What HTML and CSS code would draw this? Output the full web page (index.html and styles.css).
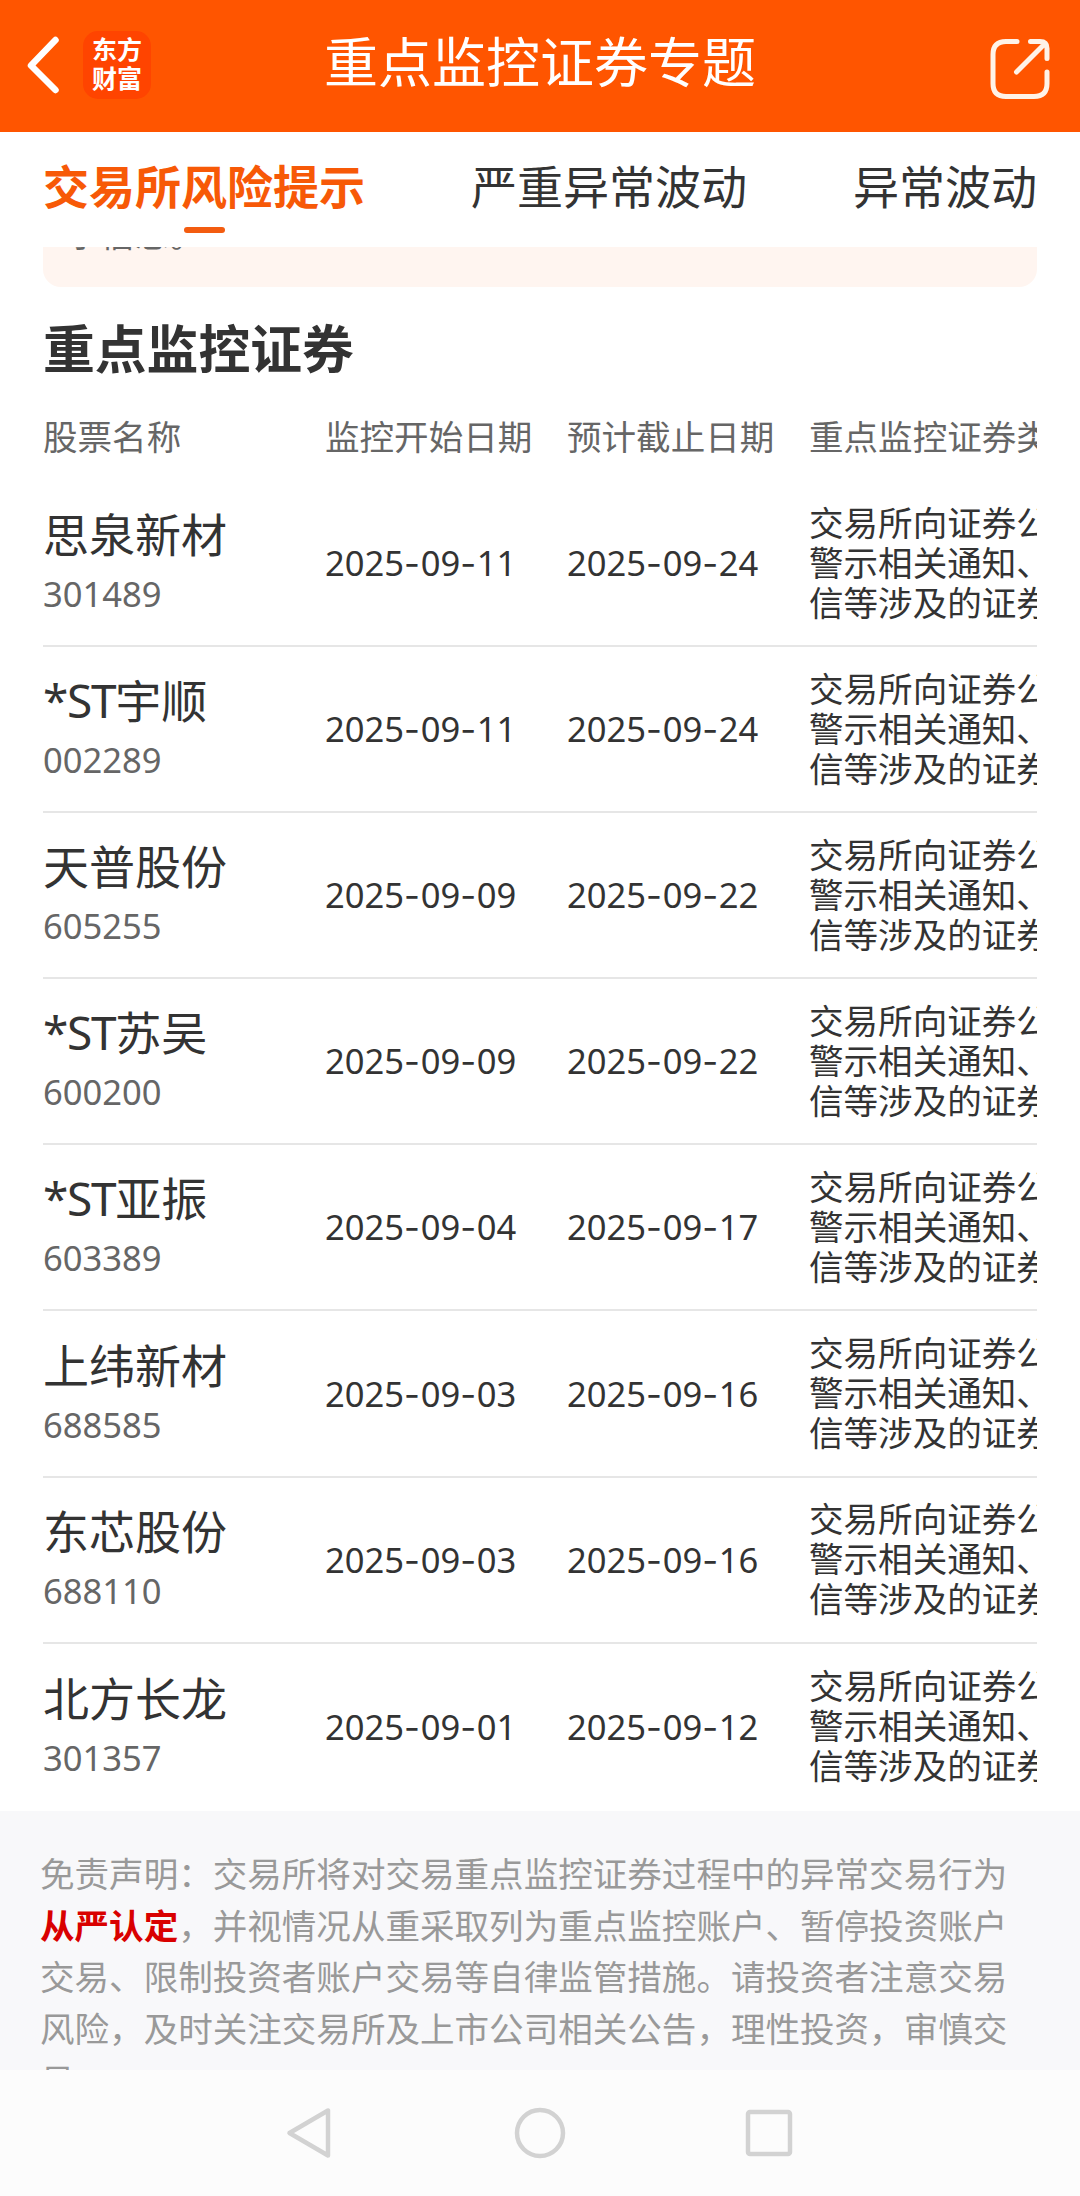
FILE: index.html
```html
<!DOCTYPE html>
<html lang="zh-CN">
<head>
    <meta charset="UTF-8">
    <meta name="viewport" content="width=device-width, initial-scale=1.0">
    <title>重点监控证券专题</title>
    <link rel="stylesheet" href="styles.css">
</head>
<body>
    <header class="top-bar">
        <div class="top-left">
            <svg class="back" width="36" height="60" viewBox="0 0 36 60" fill="none" stroke="#fff" stroke-width="6.5" stroke-linecap="round" stroke-linejoin="round">
                <path d="M29.500 5L5 30.500L29.500 55"/>
            </svg>
            <div class="logo"><span>东方</span><span>财富</span></div>
        </div>
        <h1>重点监控证券专题</h1>
        <svg class="share" width="60" height="62" viewBox="0 0 60 62" fill="none" stroke="#fff3e8" stroke-width="5" stroke-linecap="round" stroke-linejoin="round">
            <path d="M27 3.500H16Q3 3.500 3 16.500V45.500Q3 58.500 16 58.500H44Q57 58.500 57 45.500V34"/>
            <path d="M40.500 3.500H50Q57 3.500 57 10.500V20.500M54.500 6L26.500 34"/>
        </svg>
    </header>

    <nav class="tabs">
        <a class="tab active">交易所风险提示</a>
        <a class="tab">严重异常波动</a>
        <a class="tab">异常波动</a>
    </nav>

    <main>
        <div class="tip-window">
            <div class="tip">示信息。</div>
        </div>

        <h2>重点监控证券</h2>

        <div class="table">
            <div class="row head">
                <div>股票名称</div>
                <div>监控开始日期</div>
                <div>预计截止日期</div>
                <div>重点监控证券类型</div>
            </div>
            <div id="rows"></div>
        </div>
    </main>

    <section class="disclaimer">
        <p>免责声明：交易所将对交易重点监控证券过程中的异常交易行为<b>从严认定</b>，并视情况从重采取列为重点监控账户、暂停投资账户交易、限制投资者账户交易等自律监管措施。请投资者注意交易风险，及时关注交易所及上市公司相关公告，理性投资，审慎交易。</p>
    </section>

    <footer class="sys-nav">
        <svg width="52" height="52" viewBox="0 0 52 52"><path d="M43 3.500V48.500L4.500 26Z"/></svg>
        <svg width="52" height="52" viewBox="0 0 52 52"><circle cx="26" cy="26" r="23"/></svg>
        <svg width="52" height="52" viewBox="0 0 52 52"><rect x="5" y="5" width="42" height="42" rx="2"/></svg>
    </footer>

    <script>
        const stocks = [
            ['思泉新材', '301489', '2025-09-11', '2025-09-24'],
            ['*ST宇顺', '002289', '2025-09-11', '2025-09-24'],
            ['天普股份', '605255', '2025-09-09', '2025-09-22'],
            ['*ST苏吴', '600200', '2025-09-09', '2025-09-22'],
            ['*ST亚振', '603389', '2025-09-04', '2025-09-17'],
            ['上纬新材', '688585', '2025-09-03', '2025-09-16'],
            ['东芯股份', '688110', '2025-09-03', '2025-09-16'],
            ['北方长龙', '301357', '2025-09-01', '2025-09-12']
        ];

        // 日期里的横线单独用较宽的字形
        const formatDate = d => d.replace(/-/g, '<span class="dash">-</span>');
        const formatName = n => n.replace('*ST', '<span class="st">*ST</span>');

        document.getElementById('rows').innerHTML = stocks.map(s => `
            <div class="row">
                <div>
                    <div class="name">${formatName(s[0])}</div>
                    <div class="code">${s[1]}</div>
                </div>
                <div class="date">${formatDate(s[2])}</div>
                <div class="date">${formatDate(s[3])}</div>
                <div class="type">交易所向证券公<br>警示相关通知、<br>信等涉及的证券</div>
            </div>`).join('');
    </script>
</body>
</html>
```
FILE: styles.css
```css
* {
    box-sizing: border-box;
}

body {
    margin: 0;
    width: 1080px;
    height: 2196px;
    overflow: hidden;
    display: flex;
    flex-direction: column;
    font-family: "Noto Sans", "Noto Sans CJK SC", sans-serif;
    font-size: 34.56px;
    color: #333;
    background: #fff;
}

h1, h2, p {
    margin: 0;
}

/* 顶部栏 */
.top-bar {
    flex: none;
    height: 132px;
    padding: 0 30px 0 26px;
    display: grid;
    grid-template-columns: 1fr auto 1fr;
    align-items: center;
    background: #ff5500;
    color: #fff;
}

.top-left {
    display: flex;
    align-items: center;
    gap: 21px;
    margin-bottom: 3px;
}

.logo {
    width: 68px;
    height: 68px;
    padding-bottom: 3px;
    border-radius: 15px;
    background: #ff4400;
    display: flex;
    flex-direction: column;
    align-items: center;
    justify-content: center;
    font-family: "Noto Sans CJK SC", sans-serif;
    font-size: 25px;
    font-weight: 700;
    line-height: 29px;
}

.top-bar h1 {
    font-size: 54px;
    font-weight: 400;
    line-height: 70px;
    margin: 0 -2px 13px 2px;
    font-family: "Noto Sans CJK SC", sans-serif;
}

.share {
    justify-self: end;
    margin-top: 6px;
}

/* 标签页 */
.tabs {
    flex: none;
    height: 115px;
    padding: 0 43px;
    display: flex;
    justify-content: space-between;
    font-family: "Noto Sans CJK SC", sans-serif;
    font-size: 46px;
    line-height: 70px;
}

.tab {
    display: flex;
    flex-direction: column;
    align-items: center;
    padding-top: 17px;
}

.tab.active {
    color: #f75907;
    font-weight: 700;
}

.tab.active::after {
    content: "";
    width: 41px;
    height: 6px;
    margin-top: 8px;
    border-radius: 3px;
    background: #f35c10;
}

main {
    flex: none;
    height: 1564px;
    padding: 0 43px;
    overflow: hidden;
}

/* 已滚动到标签栏下面的提示框 */
.tip-window {
    height: 40px;
    overflow: hidden;
    display: flex;
    align-items: flex-end;
}

.tip {
    flex: 1;
    padding: 20px 23px 27px;
    border-radius: 18px;
    line-height: 52px;
    color: #666;
    background: #fff5f0;
}

h2 {
    font-size: 51.8px;
    line-height: 70px;
    margin-top: 25px;
    font-family: "Noto Sans CJK SC", sans-serif;
}

/* 表格 */
.table {
    overflow: hidden;
}

.row {
    display: grid;
    grid-template-columns: 282px 242px 242px 300px;
    align-items: center;
    height: 166.1px;
    border-bottom: 2px solid #e6e6e6;
    white-space: nowrap;
}

.row:last-child {
    border-bottom: none;
}

.row.head {
    height: 99px;
    padding-top: 10px;
    border-bottom: none;
    color: #666;
    line-height: 52px;
}

.name {
    font-size: 46px;
    line-height: 60px;
    margin-top: -2px;
}

.st {
    letter-spacing: -1.3px;
}

.code {
    line-height: 52px;
    margin-top: 4px;
    color: #666;
}

.date {
    padding-bottom: 1px;
}

.dash {
    font-family: Inter, sans-serif;
    letter-spacing: 0.7px;
}

.type {
    line-height: 40px;
    padding-bottom: 1px;
}

/* 免责声明 */
.disclaimer {
    flex: none;
    height: 259px;
    padding: 37px 40px 0;
    overflow: hidden;
    line-height: 51.7px;
    color: #999;
    background: #f8f8fa;
}

.disclaimer b {
    color: #d90000;
}

/* 系统导航键 */
.sys-nav {
    flex: 1;
    display: flex;
    justify-content: center;
    gap: 177px;
    align-items: center;
    background: #fcfcfc;
}

.sys-nav svg {
    fill: none;
    stroke: #d2d2d2;
    stroke-width: 4.5;
    stroke-linejoin: round;
}
```
